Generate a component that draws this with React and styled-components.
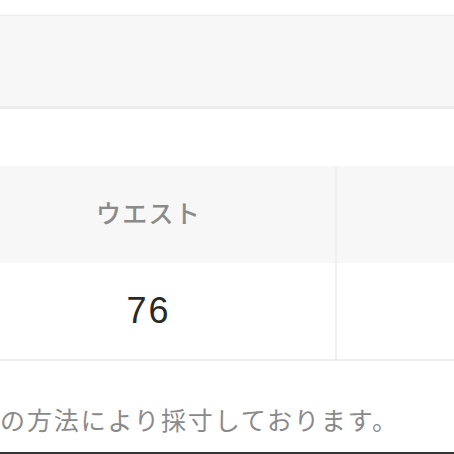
import React from "react";
import styled, { createGlobalStyle } from "styled-components";

const Global = createGlobalStyle`
  html, body { margin: 0; padding: 0; background: #ffffff; }
  body { overflow: hidden; font-family: "Noto Sans CJK JP", "Noto Sans", sans-serif; }
`;

const Page = styled.div`
  width: 454px;
  height: 454px;
  overflow: hidden;
  display: flex;
  flex-direction: column;
  background: #ffffff;
`;

const TopPanel = styled.div`
  margin-top: 15px;
  height: 90px;
  background: #f7f7f7;
  border-top: 1px solid #ededed;
  border-bottom: 3px solid #ebebeb;
  box-shadow: 0 -1px 2px rgba(0, 0, 0, 0.03);
`;

const Table = styled.div`
  margin-top: 57px;
  margin-left: -38px;
  display: grid;
  grid-template-columns: 375px 1fr;
  border-bottom: 2px solid #eeeeee;
`;

const Cell = styled.div`
  display: flex;
  align-items: center;
  justify-content: center;
  box-sizing: border-box;
  background: ${(p) => (p.$head ? "#f7f7f7" : "#ffffff")};
  height: ${(p) => (p.$head ? "97px" : "96px")};
  padding-bottom: ${(p) => (p.$head ? "6px" : "0")};
  border-right: ${(p) => (p.$divider ? "2px solid #efefef" : "none")};
  color: ${(p) => (p.$head ? "#8a8a8a" : "#2a2a2a")};
  font-size: ${(p) => (p.$head ? "25px" : "36px")};
  font-weight: ${(p) => (p.$head ? 500 : 400)};
  letter-spacing: ${(p) => (p.$head ? "1.2px" : "2px")};
  font-family: ${(p) =>
    p.$head
      ? '"Noto Sans CJK JP", sans-serif'
      : '"Liberation Sans", "Noto Sans", sans-serif'};
`;

const Note = styled.p`
  margin: 42px 0 0 0;
  font-size: 25px;
  line-height: 32px;
  letter-spacing: 1.9px;
  color: #8a8a8a;
  white-space: nowrap;
`;

const Spacer = styled.div`
  flex: 1;
`;

const BottomEdge = styled.div`
  height: 2px;
  background: #333333;
`;

export default function App() {
  return (
    <Page>
      <Global />
      <TopPanel />
      <Table>
        <Cell $head $divider>ウエスト</Cell>
        <Cell $head />
        <Cell $divider>76</Cell>
        <Cell />
      </Table>
      <Note>の方法により採寸しております。</Note>
      <Spacer />
      <BottomEdge />
    </Page>
  );
}
